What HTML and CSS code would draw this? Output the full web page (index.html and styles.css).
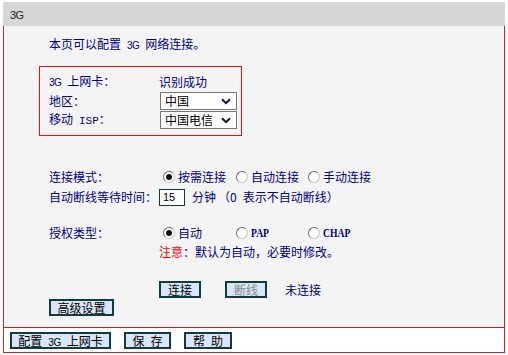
FILE: index.html
```html
<!DOCTYPE html>
<html lang="zh-CN">
<head>
    <meta charset="UTF-8">
    <meta name="viewport" content="width=device-width, initial-scale=1.0">
    <title>3G</title>
    <link rel="stylesheet" href="styles.css">
</head>
<body>
    <div class="panel">
        <div class="title"><span class="en">3G</span></div>
        <div class="main">
            <p class="intro">本页可以配置&ensp;<span class="en">3G</span>&ensp;网络连接。</p>

            <div class="card">
                <div class="row">
                    <span class="lab"><span class="en">3G</span>&ensp;上网卡：</span>
                    <span>识别成功</span>
                </div>
                <div class="row">
                    <span class="lab">地区：</span>
                    <div class="sel">
                        <span>中国</span>
                        <svg width="10" height="7" viewBox="0 0 10 7"><path d="M1 1.2 L5 5.2 L9 1.2" fill="none" stroke="#101040" stroke-width="2"/></svg>
                    </div>
                </div>
                <div class="row">
                    <span class="lab">移动&ensp;<span class="mono">ISP</span>：</span>
                    <div class="sel">
                        <span>中国电信</span>
                        <svg width="10" height="7" viewBox="0 0 10 7"><path d="M1 1.2 L5 5.2 L9 1.2" fill="none" stroke="#101040" stroke-width="2"/></svg>
                    </div>
                </div>
            </div>

            <div class="form">
                <div class="row">
                    <span class="lab">连接模式：</span>
                    <div class="opts">
                        <span class="opt"><i class="radio on"></i>按需连接</span>
                        <span class="opt"><i class="radio"></i>自动连接</span>
                        <span class="opt"><i class="radio"></i>手动连接</span>
                    </div>
                </div>
                <div class="row r2">
                    <span class="lab">自动断线等待时间：</span>
                    <span class="box">15</span>
                    <span class="unit">分钟</span>
                    <span class="hint">（0&ensp;表示不自动断线）</span>
                </div>
                <div class="row r3">
                    <span class="lab">授权类型：</span>
                    <div class="opts">
                        <span class="opt"><i class="radio on"></i>自动</span>
                        <span class="opt"><i class="radio"></i><b class="serif">PAP</b></span>
                        <span class="opt"><i class="radio"></i><b class="serif">CHAP</b></span>
                    </div>
                </div>
                <div class="row r4">
                    <span class="lab"></span>
                    <span class="note"><em>注意</em>：默认为自动，必要时修改。</span>
                </div>
            </div>

            <div class="actions">
                <span class="lab"></span>
                <span class="btn w42">连接</span>
                <span class="btn w42 off">断线</span>
                <span class="status">未连接</span>
            </div>
            <span class="btn adv">高级设置</span>
        </div>
        <div class="foot">
            <span class="btn f1">配置&ensp;<span class="en">3G</span>&ensp;上网卡</span>
            <span class="btn f2">保&ensp;存</span>
            <span class="btn f3">帮&ensp;助</span>
        </div>
    </div>
</body>
</html>
```

FILE: styles.css
```css
* {
    margin: 0;
    padding: 0;
    box-sizing: border-box;
}
body {
    font: 12px/16px "Noto Sans CJK SC", sans-serif;
    color: #000080;
    background: #fff;
}
.en {
    font-family: "Liberation Sans", sans-serif;
    font-size: 10px;
    letter-spacing: -0.5px;
}
.mono {
    font-family: "Liberation Mono", monospace;
    font-size: 11px;
}
.serif {
    display: inline-block;
    font-family: "Liberation Serif", serif;
    font-size: 13px;
    transform: scaleX(0.74);
    transform-origin: left center;
}
.panel {
    width: 502px;
    margin: 2px 0 0 3px;
}
.title {
    height: 24px;
    line-height: 24px;
    padding-left: 7px;
    background: #d6d6d6;
    color: #222;
}
.title .en {
    font-size: 11px;
}
.main {
    background: #f4f4f4;
    border-left: 1px solid #b83232;
    border-right: 1px solid #e01c1c;
    padding: 10px 0 11px 35px;
}
.intro {
    margin-left: 10px;
    margin-bottom: 12px;
}
.row {
    display: flex;
    align-items: center;
    height: 18px;
    white-space: nowrap;
}
.lab {
    width: 110px;
    flex: none;
}

/* 上网卡信息框 */
.card {
    width: 203px;
    height: 70px;
    border: 1px solid #e81010;
    padding: 6px 0 0 9px;
}
.card .row + .row {
    margin-top: 1px;
}
.sel {
    width: 77px;
    height: 18px;
    margin-left: 1px;
    border: 1px solid #777;
    background: #fff;
    color: #000;
    display: flex;
    align-items: center;
    justify-content: space-between;
    padding: 0 5px 0 4px;
}
.sel svg {
    display: block;
}

/* 连接设置 */
.form {
    margin: 32px 0 0 10px;
}
.r2 { margin-top: 2px; }
.r3 { margin-top: 18px; }
.r4 { margin-top: 1px; }
.opts {
    display: grid;
    grid-template-columns: 73px 72px auto;
}
.opt {
    display: flex;
    align-items: center;
}
.radio {
    width: 12px;
    height: 12px;
    margin: 0 3px 0 4px;
    border-radius: 50%;
    border: 1px solid;
    border-color: #6a6a6a #c8c8c8 #c8c8c8 #6a6a6a;
    background: #fff;
    position: relative;
}
.radio.on::after {
    content: "";
    position: absolute;
    left: 2px;
    top: 2px;
    width: 6px;
    height: 6px;
    border-radius: 50%;
    background: #111;
}
.box {
    width: 26px;
    height: 17px;
    border: 1px solid #0c3a3a;
    background: #fff;
    color: #000;
    font: 11px/15px "Liberation Sans", sans-serif;
    padding-left: 3px;
}
.unit {
    margin-left: 7px;
}
.hint {
    margin-left: 2px;
}
.note em {
    font-style: normal;
    color: #f00;
}

/* 按钮 */
.actions {
    display: flex;
    align-items: center;
    margin: 20px 0 0 10px;
    height: 17px;
}
.btn {
    display: inline-block;
    height: 17px;
    border: 2px solid #123c3c;
    background: #d8e6f8;
    color: #000;
    text-align: center;
    line-height: 13px;
    white-space: nowrap;
}
.w42 {
    width: 42px;
    margin-right: 24px;
}
.btn.off {
    color: #8a8a8a;
    margin-right: 18px;
}
.adv {
    width: 65px;
    margin: 1px 0 0 10px;
    display: block;
}
.foot {
    border: 1px solid #cc2020;
    border-left-color: #b83232;
    padding: 4px 0 3px 6px;
    display: flex;
    gap: 13px;
}
.f1 { width: 101px; }
.f2 { width: 47px; }
.f3 { width: 48px; }
```
